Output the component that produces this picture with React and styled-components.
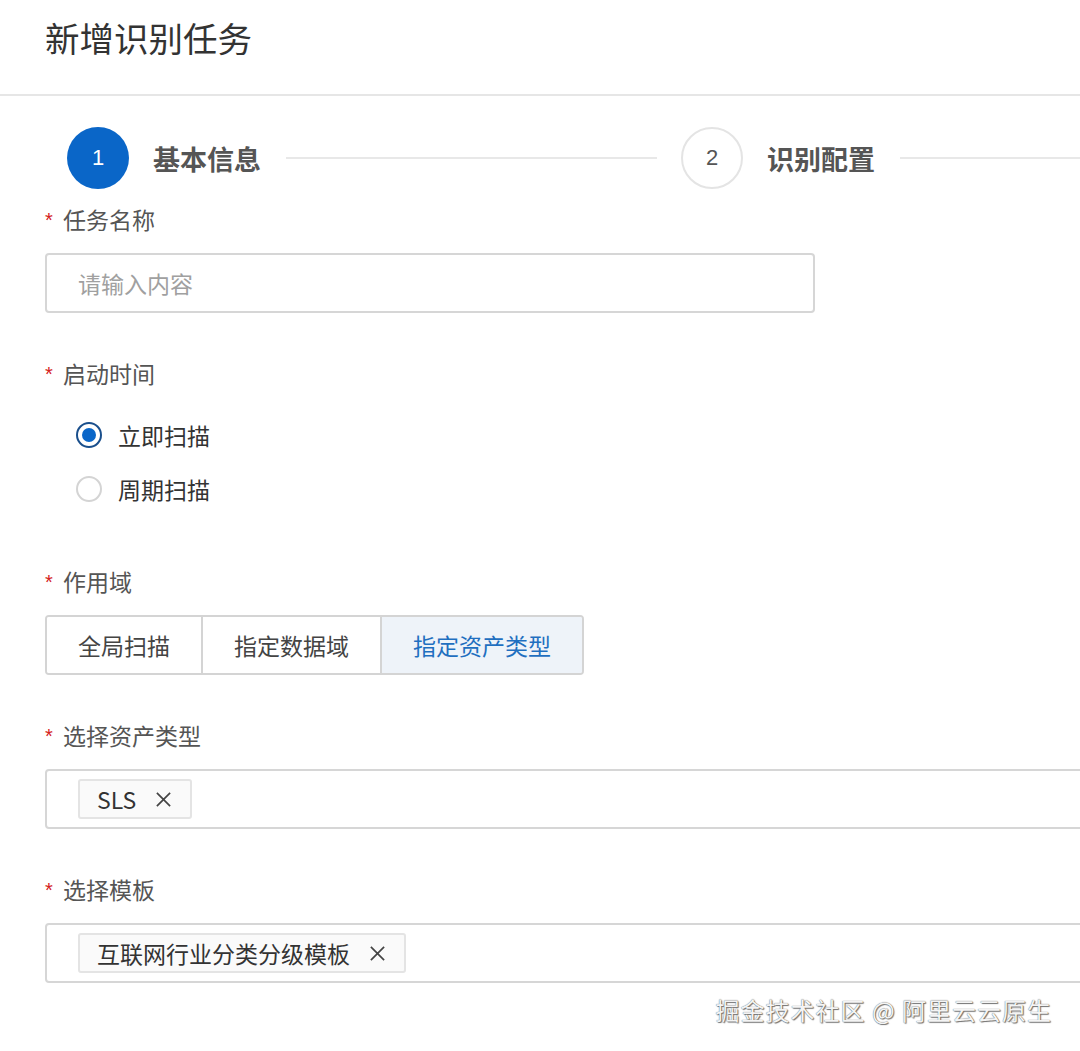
import React from 'react'
import styled, { createGlobalStyle } from 'styled-components'

const GlobalStyle = createGlobalStyle`
    html, body {
        margin: 0;
        padding: 0;
        background: #ffffff;
        overflow: hidden;
    }
    body {
        font-family: "Noto Sans CJK SC", "Noto Sans", sans-serif;
        color: #333;
    }
`

const steps = [
    { num: 1, title: '基本信息', active: true },
    { num: 2, title: '识别配置' },
]

const scopes = ['全局扫描', '指定数据域', '指定资产类型']

function App() {
    return (
        <Page>
            <GlobalStyle />
            <Header>
                <Title>新增识别任务</Title>
            </Header>

            <Steps>
                {steps.map(step => (
                    <Step key={step.num}>
                        <StepCircle active={step.active}>{step.num}</StepCircle>
                        <StepTitle>{step.title}</StepTitle>
                        <StepLine />
                    </Step>
                ))}
            </Steps>

            <Form>
                <FormItem>
                    <Label>任务名称</Label>
                    <Input>请输入内容</Input>
                </FormItem>

                <FormItem>
                    <Label>启动时间</Label>
                    <RadioGroup>
                        <RadioRow>
                            <Radio checked />
                            <span>立即扫描</span>
                        </RadioRow>
                        <RadioRow>
                            <Radio />
                            <span>周期扫描</span>
                        </RadioRow>
                    </RadioGroup>
                </FormItem>

                <FormItem>
                    <Label>作用域</Label>
                    <ButtonGroup>
                        {scopes.map((item, i) => (
                            <SegButton key={item} selected={i === 2}>{item}</SegButton>
                        ))}
                    </ButtonGroup>
                </FormItem>

                <FormItem>
                    <Label>选择资产类型</Label>
                    <Select>
                        <Tag>
                            SLS
                            <Close />
                        </Tag>
                    </Select>
                </FormItem>

                <FormItem>
                    <Label>选择模板</Label>
                    <Select>
                        <Tag>
                            互联网行业分类分级模板
                            <Close />
                        </Tag>
                    </Select>
                </FormItem>
            </Form>

            <Watermark>掘金技术社区 @ 阿里云云原生</Watermark>
        </Page>
    )
}

function Close() {
    return (
        <CloseIcon viewBox="0 0 18 18">
            <path d="M2 2 L16 16 M16 2 L2 16" stroke="#444" strokeWidth="1.8" fill="none" />
        </CloseIcon>
    )
}

export default App

const Page = styled.div`
    position: relative;
    width: 1080px;
    height: 1051px;
    overflow: hidden;
`

const Header = styled.div`
    height: 96px;
    padding: 15px 0 0 45px;
    box-sizing: border-box;
    border-bottom: 2px solid #e6e6e6;
`

const Title = styled.div`
    font-size: 34.5px;
    line-height: 44px;
    color: #333;
`

const Steps = styled.div`
    display: flex;
    padding: 31px 0 0 67px;
    width: 1400px;
`

const Step = styled.div`
    width: 614px;
    display: flex;
    align-items: center;
`

const StepCircle = styled.div`
    width: ${p => p.active ? 62 : 58}px;
    height: ${p => p.active ? 62 : 58}px;
    border-radius: 50%;
    background: ${p => p.active ? '#0a66c8' : '#fff'};
    border: ${p => p.active ? 'none' : '2px solid #e4e4e4'};
    color: ${p => p.active ? '#fff' : '#555'};
    display: flex;
    align-items: center;
    justify-content: center;
    font-family: "Liberation Sans", Arial, sans-serif;
    font-size: 22px;
    flex-shrink: 0;
`

const StepTitle = styled.div`
    margin-left: 24px;
    font-size: 27px;
    font-weight: 700;
    color: #555;
    white-space: nowrap;
`

const StepLine = styled.div`
    flex: 1;
    height: 2px;
    background: #e8e8e8;
    margin: 0 24px 0 25px;
`

const Form = styled.div`
    padding: 14px 0 0 45px;
`

const FormItem = styled.div`
    margin-bottom: 44px;
`

const Label = styled.div`
    font-size: 23px;
    line-height: 32px;
    color: #555;
    margin-bottom: 18px;
    padding-left: 18px;
    position: relative;

    &::before {
        content: '*';
        position: absolute;
        left: 0;
        top: 1px;
        color: #d42020;
        font-family: "Liberation Sans", Arial, sans-serif;
        font-size: 20px;
    }
`

const Input = styled.div`
    width: 770px;
    height: 60px;
    box-sizing: border-box;
    border: 2px solid #d6d6d6;
    border-radius: 4px;
    display: flex;
    align-items: center;
    padding-left: 31px;
    font-size: 23px;
    color: #a0a0a0;
`

const RadioGroup = styled.div`
    padding: 1px 0 5px 31px;
`

const RadioRow = styled.div`
    height: 54px;
    display: flex;
    align-items: center;
    font-size: 23px;
    color: #333;

    span {
        margin-left: 16px;
    }
`

const Radio = styled.div`
    width: 26px;
    height: 26px;
    box-sizing: border-box;
    border-radius: 50%;
    border: ${p => p.checked ? '2.5px solid #1a4f8c' : '2px solid #d4d4d4'};
    background: #fff;
    display: flex;
    align-items: center;
    justify-content: center;

    &::after {
        content: '';
        display: ${p => p.checked ? 'block' : 'none'};
        width: 14px;
        height: 14px;
        border-radius: 50%;
        background: #0a66c8;
    }
`

const ButtonGroup = styled.div`
    display: inline-flex;
    height: 60px;
    border: 2px solid #d4d4d4;
    border-radius: 4px;
    box-sizing: border-box;
    overflow: hidden;
`

const SegButton = styled.div`
    display: flex;
    align-items: center;
    padding: 0 31px;
    font-size: 23px;
    color: ${p => p.selected ? '#1f6fc0' : '#444'};
    background: ${p => p.selected ? '#eef3f9' : '#fff'};

    & + & {
        border-left: 2px solid #d4d4d4;
    }
`

const Select = styled.div`
    width: 1100px;
    height: 60px;
    box-sizing: border-box;
    border: 2px solid #d6d6d6;
    border-radius: 4px;
    display: flex;
    align-items: center;
    padding-left: 31px;
`

const Tag = styled.div`
    height: 40px;
    box-sizing: border-box;
    border: 2px solid #e4e4e4;
    border-radius: 3px;
    background: #fafafa;
    display: flex;
    align-items: center;
    padding: 0 18px 0 17px;
    font-size: 23px;
    color: #333;
`

const CloseIcon = styled.svg`
    width: 17px;
    height: 17px;
    margin-left: 19px;
`

const Watermark = styled.div`
    position: absolute;
    right: 28px;
    top: 993px;
    font-size: 24px;
    line-height: 34px;
    color: #f4f4f4;
    text-shadow: 0 0 1px #444, 1px 1px 1px #777;
    letter-spacing: 1px;
`
